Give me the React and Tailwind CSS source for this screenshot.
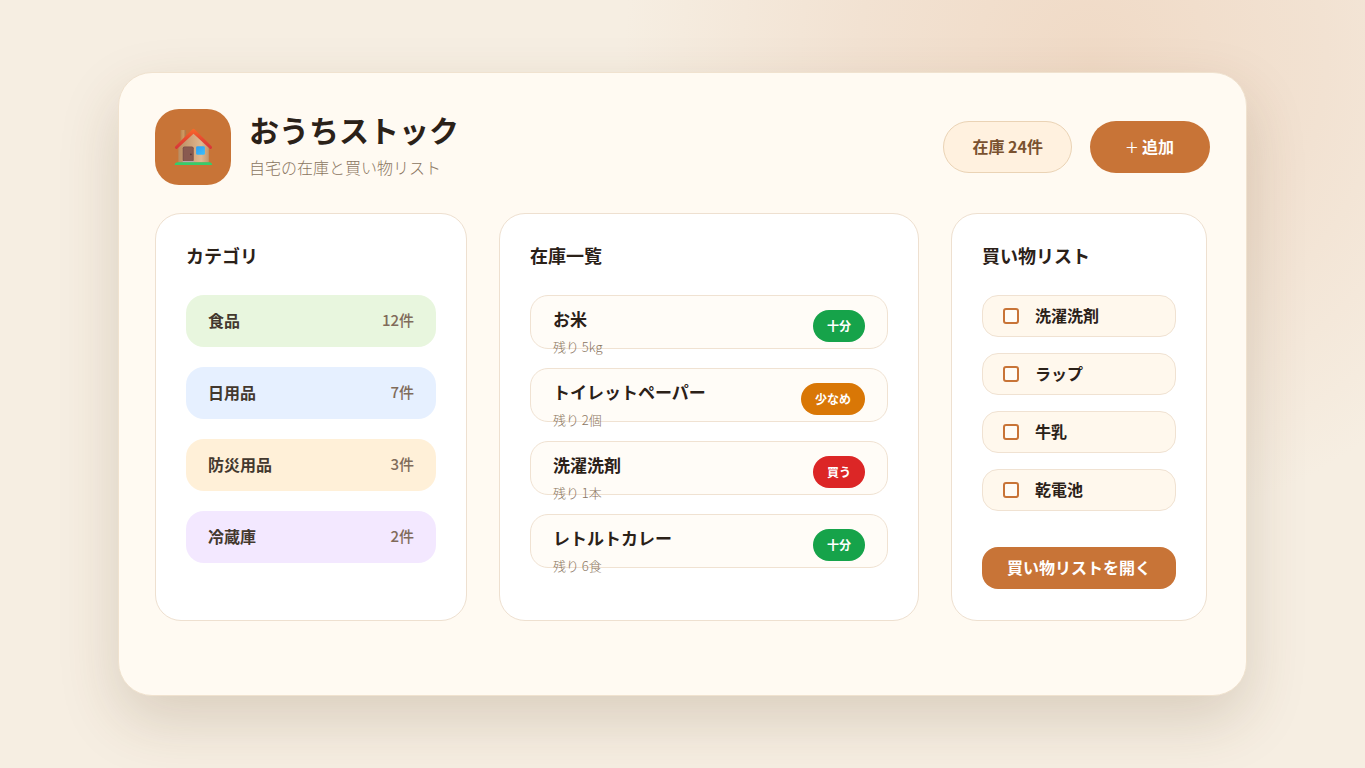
const categories = [
  { name: "食品", count: "12件", tone: "bg-[#e8f6de]" },
  { name: "日用品", count: "7件", tone: "bg-[#e6f0ff]" },
  { name: "防災用品", count: "3件", tone: "bg-[#fff0d8]" },
  { name: "冷蔵庫", count: "2件", tone: "bg-[#f3e8ff]" },
];

const stock = [
  { name: "お米", rest: "残り 5kg", status: "十分", tone: "bg-[#16a34a]" },
  { name: "トイレットペーパー", rest: "残り 2個", status: "少なめ", tone: "bg-[#d97706]" },
  { name: "洗濯洗剤", rest: "残り 1本", status: "買う", tone: "bg-[#dc2626]" },
  { name: "レトルトカレー", rest: "残り 6食", status: "十分", tone: "bg-[#16a34a]" },
];

const shopping = ["洗濯洗剤", "ラップ", "牛乳", "乾電池"];

function HouseIcon() {
  return (
    <svg viewBox="0 0 40 40" className="h-10 w-10" aria-hidden="true">
      <defs>
        <linearGradient id="wall" x1="0" x2="1" y1="0" y2="0">
          <stop offset="0" stopColor="#b98d62" />
          <stop offset="0.45" stopColor="#d3a67c" />
          <stop offset="0.75" stopColor="#e0b890" />
          <stop offset="1" stopColor="#c4976c" />
        </linearGradient>
        <linearGradient id="chimney" x1="0" x2="1" y1="0" y2="0">
          <stop offset="0" stopColor="#b98450" />
          <stop offset="0.5" stopColor="#d09a62" />
          <stop offset="1" stopColor="#a97244" />
        </linearGradient>
        <linearGradient id="roof" x1="0" x2="0" y1="0" y2="1">
          <stop offset="0" stopColor="#f96a2a" />
          <stop offset="0.5" stopColor="#e64a30" />
          <stop offset="1" stopColor="#d6353a" />
        </linearGradient>
        <linearGradient id="glass" x1="0" x2="1" y1="0" y2="1">
          <stop offset="0" stopColor="#2f9df0" />
          <stop offset="1" stopColor="#3cc0fb" />
        </linearGradient>
      </defs>
      <rect x="7.5" y="3" width="5.6" height="16" rx="0.8" fill="url(#chimney)" />
      <path d="M5.4 20 20.5 5 35.8 20V35.5H5.4Z" fill="url(#wall)" />
      <rect x="9.7" y="19.4" width="11" height="15.4" rx="1.8" fill="#7a4f48" />
      <rect x="10.6" y="20.3" width="9.2" height="14.5" rx="1" fill="#895a50" />
      <circle cx="17.9" cy="27.4" r="0.8" fill="#52342f" />
      <rect x="9.7" y="34" width="11.4" height="1.4" fill="#b7aaae" />
      <rect x="23.1" y="19.2" width="8.8" height="8.6" rx="1.4" fill="url(#glass)" />
      <path
        d="M19.2 2.4Q20.5 1.2 21.8 2.4L38.8 19.4Q39.5 20.8 38.6 21.6Q37.6 22.3 36.6 21.4L20.5 6.8 4.4 21.4Q3.4 22.3 2.4 21.6Q1.4 20.8 2.2 19.4Z"
        fill="url(#roof)"
      />
      <path d="M1.6 38Q1.6 35.6 4 35.2H37Q39.2 35.6 39.2 38Z" fill="#35cd6b" />
    </svg>
  );
}

function Panel({ title, children }) {
  return (
    <section className="min-h-[408px] min-w-0 rounded-[26px] border border-[#eee0d0] bg-white px-[30px] pt-[29px] pb-[30px]">
      <h2 className="mb-7 text-[18px] leading-6 font-bold">{title}</h2>
      {children}
    </section>
  );
}

export default function App() {
  return (
    <div className="flex min-h-screen items-center justify-center bg-[#f6eee2] bg-[radial-gradient(circle_at_80%_8%,#f0dac6_0%,#f2e2d2_18%,#f6eee2_36%)] px-[118px] py-10 font-['Noto_Sans_CJK_JP',sans-serif] text-[#2b2118]">
      <main className="w-full rounded-[34px] border border-[#f0e2cf] bg-[#fffaf2] px-9 pt-9 pb-[74px] shadow-[0_24px_60px_rgba(90,60,30,0.18)]">
        <header className="mb-7 flex items-center justify-between">
          <div className="flex items-center gap-[18px]">
            <div className="flex h-[76px] w-[76px] items-center justify-center rounded-3xl bg-[#c87437]">
              <HouseIcon />
            </div>
            <div className="pb-1">
              <h1 className="text-[30px] leading-10 font-bold">おうちストック</h1>
              <p className="mt-1 text-[16px] leading-7 font-light text-[#8a7560]">自宅の在庫と買い物リスト</p>
            </div>
          </div>
          <div className="flex items-center gap-[18px]">
            <span className="flex h-[52px] items-center rounded-[26px] border border-[#ead3b5] bg-[#fff1df] px-7 pb-[2px] text-[16px] font-bold text-[#7a5230]">
              在庫 24件
            </span>
            <button
              type="button"
              className="flex h-[52px] w-[120px] items-center justify-center gap-1 rounded-[26px] bg-[#c87437] pb-[2px] text-[16px] font-bold text-white"
            >
              <span className="text-[22px] leading-6 font-light">+</span>
              <span>追加</span>
            </button>
          </div>
        </header>

        <div className="grid grid-cols-[312fr_420fr_256fr] gap-8 pr-[3px]">
          <Panel title="カテゴリ">
            <ul className="flex flex-col gap-5">
              {categories.map((c) => (
                <li
                  key={c.name}
                  className={`flex h-[52px] items-center justify-between rounded-[18px] px-[22px] pb-[2px] ${c.tone}`}
                >
                  <span className="text-[16px] font-bold text-[#43382e]">{c.name}</span>
                  <span className="text-[15px] font-medium text-[#806b5a]">{c.count}</span>
                </li>
              ))}
            </ul>
          </Panel>

          <Panel title="在庫一覧">
            <ul className="flex flex-col gap-[19px]">
              {stock.map((s) => (
                <li
                  key={s.name}
                  className="flex h-[54px] items-start justify-between rounded-[18px] border border-[#f0e2d2] bg-[#fffcf7] px-[22px] pt-[14px]"
                >
                  <div>
                    <h3 className="text-[17px] leading-[18px] font-bold">{s.name}</h3>
                    <p className="mt-[9px] text-[13px] leading-5 font-light text-[#8a7560]">{s.rest}</p>
                  </div>
                  <span
                    className={`flex h-8 items-center rounded-full px-[14px] text-[12px] font-bold text-white ${s.tone}`}
                  >
                    {s.status}
                  </span>
                </li>
              ))}
            </ul>
          </Panel>

          <Panel title="買い物リスト">
            <ul className="flex flex-col gap-4">
              {shopping.map((name) => (
                <li key={name}>
                  <label className="flex h-[42px] items-center gap-4 rounded-2xl border border-[#f0e2d2] bg-[#fff8ed] px-5 text-[16px] font-bold">
                    <input
                      type="checkbox"
                      className="h-4 w-4 appearance-none rounded-[3px] border-2 border-[#c87437] bg-white/50 checked:bg-[#c87437]"
                    />
                    <span className="pb-[3px]">{name}</span>
                  </label>
                </li>
              ))}
            </ul>
            <button
              type="button"
              className="mt-9 h-[42px] w-full rounded-2xl bg-[#c87437] pb-[3px] text-[16px] font-bold text-white"
            >
              買い物リストを開く
            </button>
          </Panel>
        </div>
      </main>
    </div>
  );
}
